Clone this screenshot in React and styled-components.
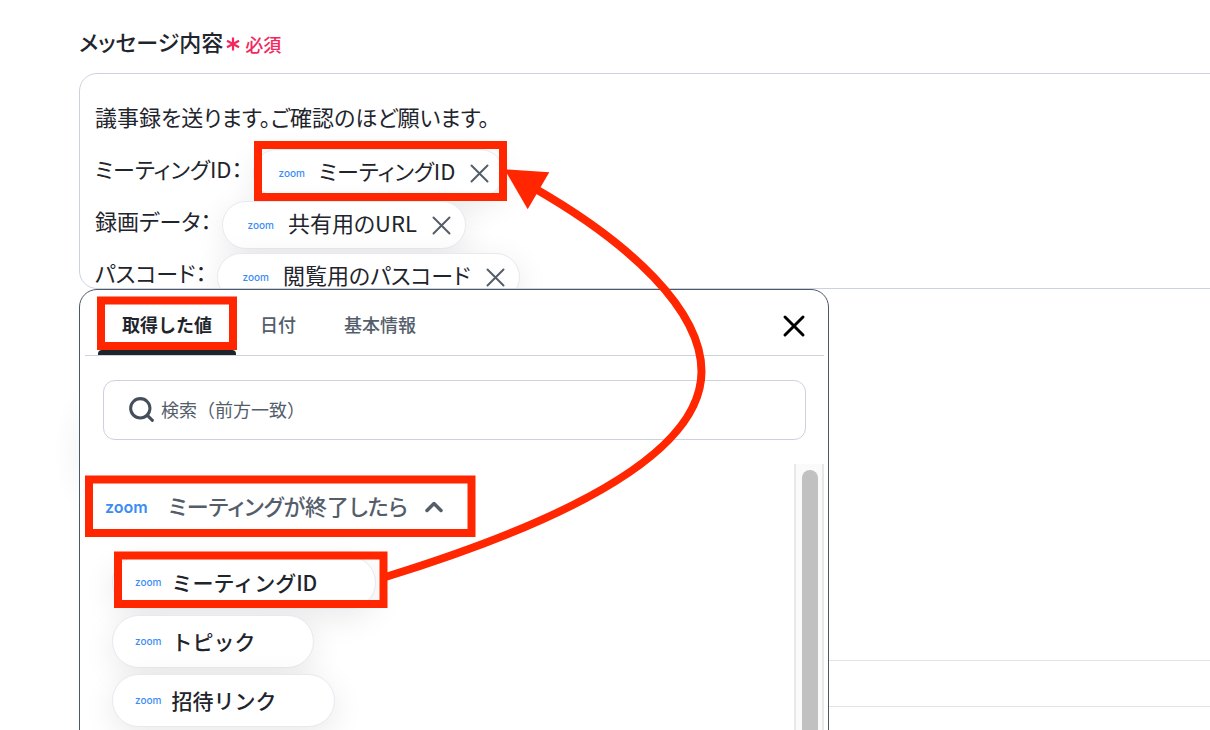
import { useState } from "react";
import styled, { createGlobalStyle } from "styled-components";
import { ChevronUp, Search, X } from "lucide-react";

const theme = {
  ink: "#1f252c",
  slate: "#545e6b",
  border: "#cbd2de",
  danger: "#f4265c",
  zoomBlue: "#3a8df5",
  marker: "#ff2600",
};

const GlobalStyle = createGlobalStyle`
  * {
    box-sizing: border-box;
  }

  body {
    margin: 0;
    background: #fff;
  }

  body, button, input {
    color: ${theme.ink};
    font-family: "Noto Sans CJK JP", sans-serif;
  }

  button {
    margin: 0;
    padding: 0;
    border: 0;
    background: none;
    cursor: pointer;
  }
`;

const Page = styled.main`
  position: relative;
  min-height: 100vh;
  padding: 24px 0 0 79px;
  overflow: hidden;
  background: radial-gradient(
    28px 64px at 82px 450px,
    rgba(0, 0, 0, 0.03),
    transparent
  );
`;

const FieldHeader = styled.div`
  display: flex;
  align-items: center;
  height: 36px;
  margin-bottom: 13px;
`;

const FieldLabel = styled.span`
  padding-bottom: 2px;
  font-size: 22px;
  font-weight: 500;
  line-height: 32px;
  font-feature-settings: "palt";
`;

const Required = styled.span`
  display: flex;
  align-items: center;
  gap: 5px;
  margin: 3px 0 0 3px;
  color: ${theme.danger};
  font-size: 18px;
  font-weight: 500;
  line-height: 28px;
`;

const Editor = styled.div`
  height: 216px;
  margin-right: -24px;
  padding: 0 15px;
  overflow: hidden;
  border: 1px solid ${theme.border};
  border-radius: 18px;
  font-size: 22px;
  font-feature-settings: "palt";
`;

const EditorContent = styled.div`
  padding-top: 16px;
`;

const Line = styled.div`
  display: flex;
  align-items: flex-start;
  gap: 10px;
  height: 52px;
  line-height: 52px;
  white-space: nowrap;
`;

const Chip = styled.span`
  display: flex;
  align-items: center;
  height: 48px;
  margin-top: 7px;
  padding: 0 14px 0 25px;
  background: #fff;
  border: 1px solid #e6e9f0;
  border-radius: 24px;
  box-shadow: 0 8px 32px rgba(0, 0, 0, 0.09);
`;

const ChipText = styled.span`
  margin: 0 15px 0 14px;
  padding-bottom: 6px;
`;

const IconButton = styled.button`
  display: flex;
  color: ${({ $color }) => $color || theme.slate};
`;

const Logo = styled.span`
  color: ${theme.zoomBlue};
  font-family: Inter, sans-serif;
  font-size: ${({ $large }) => ($large ? 16 : 10)}px;
  font-weight: ${({ $large }) => ($large ? 600 : 500)};
  line-height: 20px;
`;

const FormBody = styled.div`
  height: 372px;
  border-bottom: 1px solid #e4e4e4;
`;

const FormFooter = styled.div`
  height: 46px;
  border-bottom: 1px solid #e4e4e4;
`;

const Picker = styled.section`
  position: absolute;
  top: 289px;
  left: 79px;
  width: 750px;
  padding: 0 4px 24px 5px;
  background: #fff;
  border: 1px solid #4d5868;
  border-radius: 18px;
`;

const TabBar = styled.div`
  display: flex;
  align-items: stretch;
  height: 66px;
  padding: 0 18px 0 13px;
  border-bottom: 1px solid ${theme.border};
`;

const Tab = styled.button`
  position: relative;
  padding: 2px 24px 0;
  color: ${theme.slate};
  font-size: 18px;
  font-weight: 500;
  line-height: 28px;

  &[aria-selected="true"] {
    color: ${theme.ink};
    font-weight: 700;
  }

  &[aria-selected="true"]::after {
    content: "";
    position: absolute;
    right: 0;
    bottom: 0;
    left: 0;
    height: 5px;
    background: ${theme.ink};
    border-radius: 4px 4px 0 0;
  }
`;

const CloseSlot = styled.div`
  display: flex;
  align-items: center;
  margin: 7px -6px 0 auto;
`;

const SearchBox = styled.label`
  display: flex;
  align-items: center;
  gap: 5px;
  height: 60px;
  margin: 24px 18px;
  padding: 0 23px 2px;
  border: 1px solid ${theme.border};
  border-radius: 12px;
  color: #454e59;
`;

const SearchInput = styled.input`
  flex: 1;
  min-width: 0;
  padding: 0;
  border: 0;
  outline: 0;
  background: none;
  font-size: 18px;
  line-height: 28px;

  &::placeholder {
    color: ${theme.slate};
    opacity: 1;
  }
`;

const Results = styled.div`
  display: flex;
`;

const ResultList = styled.div`
  flex: 1;
  padding: 25px 0 0 20px;
`;

const GroupButton = styled.button`
  display: flex;
  align-items: center;
  height: 36px;
  color: ${theme.slate};
  font-size: 22px;
  font-weight: 500;
  line-height: 32px;
  font-feature-settings: "palt";
`;

const GroupName = styled.span`
  margin: 0 12px 0 21px;
  padding-bottom: 4px;
`;

const ValueList = styled.ul`
  display: flex;
  flex-direction: column;
  align-items: flex-start;
  gap: 6px;
  margin: 31px 0 0 7px;
  padding: 0;
  list-style: none;
`;

const ValueButton = styled.button`
  display: flex;
  align-items: center;
  gap: 10px;
  height: 53px;
  padding: 0 58px 2px 22px;
  background: #fff;
  border: 1px solid #e6e9f0;
  border-radius: 27px;
  box-shadow: 0 8px 32px rgba(0, 0, 0, 0.09);
  font-size: 21px;
  font-weight: 500;
`;

const ScrollTrack = styled.div`
  width: 30px;
  padding: 6px;
  background: #fafafa;
  border: solid #e8e8e8;
  border-width: 0 2px;
`;

const ScrollThumb = styled.div`
  width: 16px;
  height: 300px;
  background: #c1c1c1;
  border-radius: 8px;
`;

const Markup = styled.svg`
  position: absolute;
  top: 0;
  left: 0;
  pointer-events: none;
`;

const tabs = ["取得した値", "日付", "基本情報"];
const values = ["ミーティングID", "トピック", "招待リンク"];

const lines = [
  { text: "議事録を送ります。ご確認のほど願います。" },
  { text: "ミーティングID：", chip: "ミーティングID" },
  { text: "録画データ：", chip: "共有用のURL" },
  { text: "パスコード：", chip: "閲覧用のパスコード" },
];

function ValueChip({ children }) {
  return (
    <Chip>
      <Logo>zoom</Logo>
      <ChipText>{children}</ChipText>
      <IconButton type="button" aria-label="削除">
        <svg width="19" height="19" viewBox="0 0 19 19">
          <path
            d="M1.5 1.5 17.5 17.5M17.5 1.5 1.5 17.5"
            stroke="currentColor"
            strokeWidth="2"
            strokeLinecap="round"
          />
        </svg>
      </IconButton>
    </Chip>
  );
}

function Annotations() {
  return (
    <Markup width="720" height="620" aria-hidden="true">
      <g fill="none" stroke={theme.marker} strokeWidth="8">
        <rect x="258" y="145" width="245" height="52" />
        <rect x="101" y="300.5" width="132" height="45.5" />
        <rect x="89" y="479.5" width="382.5" height="53.5" />
        <rect x="118" y="555.5" width="265.5" height="48.5" />
        <path d="M383 577.5 387 576.5C560 523 701.5 455 701.5 371.5C701.5 310 630 243 534 188" />
      </g>
      <path d="M504.5 169.3 549.3 172.3 527.7 209.3Z" fill={theme.marker} />
    </Markup>
  );
}

export default function App() {
  const [tab, setTab] = useState(0);

  return (
    <Page>
      <GlobalStyle />
      <FieldHeader>
        <FieldLabel id="message-label">メッセージ内容</FieldLabel>
        <Required>
          <svg width="14" height="16" viewBox="0 0 14 16">
            <path
              d="M7 1.5V14.5M1 4.8 13 11.2M13 4.8 1 11.2"
              stroke="currentColor"
              strokeWidth="2.2"
            />
          </svg>
          必須
        </Required>
      </FieldHeader>
      <Editor role="textbox" aria-labelledby="message-label">
        <EditorContent>
          {lines.map(({ text, chip }) => (
            <Line key={text}>
              {text}
              {chip && <ValueChip>{chip}</ValueChip>}
            </Line>
          ))}
        </EditorContent>
      </Editor>
      <FormBody />
      <FormFooter />

      <Picker>
        <TabBar role="tablist">
          {tabs.map((name, i) => (
            <Tab
              key={name}
              type="button"
              role="tab"
              aria-selected={i === tab}
              onClick={() => setTab(i)}
            >
              {name}
            </Tab>
          ))}
          <CloseSlot>
            <IconButton type="button" aria-label="閉じる" $color="#000">
              <X size={36} strokeWidth={2} />
            </IconButton>
          </CloseSlot>
        </TabBar>
        <SearchBox>
          <Search size={29} strokeWidth={2.5} />
          <SearchInput
            type="text"
            aria-label="検索"
            placeholder="検索（前方一致）"
          />
        </SearchBox>
        <Results>
          <ResultList>
            <GroupButton type="button" aria-expanded="true">
              <Logo $large>zoom</Logo>
              <GroupName>ミーティングが終了したら</GroupName>
              <ChevronUp size={28} strokeWidth={3} />
            </GroupButton>
            <ValueList>
              {values.map((name) => (
                <li key={name}>
                  <ValueButton type="button">
                    <Logo>zoom</Logo>
                    {name}
                  </ValueButton>
                </li>
              ))}
            </ValueList>
          </ResultList>
          <ScrollTrack>
            <ScrollThumb />
          </ScrollTrack>
        </Results>
      </Picker>
      <Annotations />
    </Page>
  );
}
